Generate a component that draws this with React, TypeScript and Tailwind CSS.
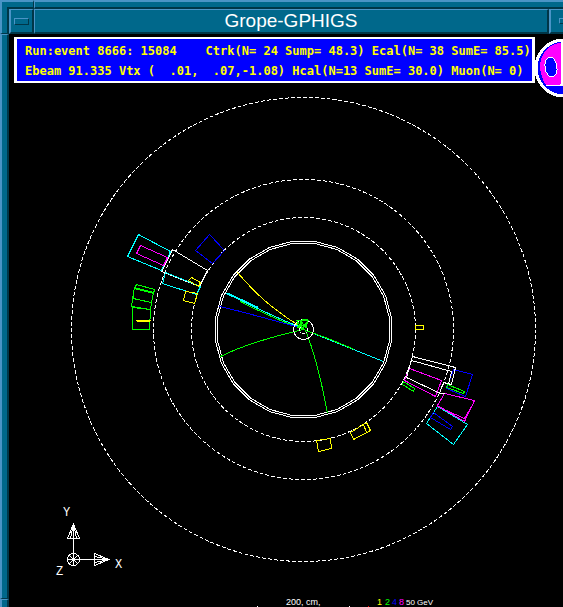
import type { ReactNode } from 'react';

// Types
interface ShapeProps {
  points: string;
  color: string;
}

// Detector geometry
const CENTER = { x: 303.5, y: 329.5 };
const WHITE = '#ffffff';
const YELLOW = '#ffff00';
const GREEN = '#00ff00';
const CYAN = '#00ffff';
const BLUE = '#0000ff';
const MAGENTA = '#ff00ff';

const DASHED_RADII = [232, 150, 112];

const towers: ShapeProps[] = [
  // upper left
  { color: WHITE, points: '172,249 207,270 199,286 161,271' },
  { color: CYAN, points: '138,234 170,251 161,270 127,256' },
  { color: MAGENTA, points: '140,245 167,257 163,265 136,253' },
  { color: CYAN, points: '165,272 200,286 196,294 162,283' },
  { color: YELLOW, points: '191,277 200,282 198,286 188,280' },
  { color: YELLOW, points: '185,291 197,293 194,303 183,300' },
  { color: BLUE, points: '209,234 224,250 212,263 195,250' },
  { color: GREEN, points: '136,284 154,289 153,293 134,288' },
  { color: GREEN, points: '134,287 153,292 151,302 132,298' },
  { color: GREEN, points: '133,293 131,306 150,309 151,302 133,298' },
  { color: GREEN, points: '132,307 150,309 149,329 132,329' },
  // right
  { color: YELLOW, points: '415,325 423,325 423,329 415,329' },
  { color: BLUE, points: '453,369 472,374 465,396 446,388' },
  { color: GREEN, points: '447,384 464,391 463,393 446,387' },
  { color: GREEN, points: '403,381 414,388 413,391 402,384' },
  { color: MAGENTA, points: '409,368 441,380 435,396 404,380' },
  { color: MAGENTA, points: '444,393 474,400 464,421 437,405' },
  { color: CYAN, points: '437,406 467,424 453,444 426,423' },
  { color: BLUE, points: '433,412 452,426 450,429 430,417' },
  // bottom
  { color: YELLOW, points: '316,440 330,438 331,448 318,451' },
  { color: YELLOW, points: '350,432 366,422 370,430 353,439' },
];

const strokes: ShapeProps[] = [
  { color: WHITE, points: '406,377 412,356 455,367 451,384 443,382 439,393 444,393' },
  { color: WHITE, points: '411,360 451,371 448,384' },
  { color: WHITE, points: '406,377 440,393' },
  { color: MAGENTA, points: '437,406 464,418 471,406' },
  { color: YELLOW, points: '363,424 366,432' },
];

const tracks = [
  { color: YELLOW, d: 'M237 272 Q254 292 270 305 T303 328' },
  { color: GREEN, d: 'M240 301 Q270 317 303 329' },
  { color: CYAN, d: 'M226 293 Q256 308 286 321 L303 328' },
  { color: CYAN, d: 'M228 293 L258 307' },
  { color: BLUE, d: 'M219 306 L240 311 L303 328' },
  { color: GREEN, d: 'M220 356 Q250 341 303 329' },
  { color: CYAN, d: 'M303 329 L338 343 L383 361' },
  { color: GREEN, d: 'M303 329 L330 339 L354 349' },
  { color: GREEN, d: 'M305 330 Q317 359 327 413' },
];

const scaleDigits = [
  { value: '1', x: 377, color: YELLOW },
  { value: '2', x: 385, color: GREEN },
  { value: '4', x: 392, color: BLUE },
  { value: '8', x: 399, color: MAGENTA },
];

const ringPoints = (apothem: number) => {
  const radius = apothem / Math.cos(Math.PI / 24);
  return Array.from({ length: 24 }, (_, i) => {
    const angle = ((i + 0.5) * Math.PI) / 12;
    return `${(CENTER.x + radius * Math.cos(angle)).toFixed(1)},${(CENTER.y + radius * Math.sin(angle)).toFixed(1)}`;
  }).join(' ');
};

// Components
const WindowFrame = ({ title, children }: { title: string; children: ReactNode }) => (
  <div className="flex min-h-screen w-full overflow-hidden bg-black">
    <div className="flex w-[9px] shrink-0 flex-col bg-[#00688b]">
      <div className="h-[7px] border-l-2 border-t-2 border-[#4a94c6]" />
      <div className="h-[27px] border-b border-l-2 border-r-2 border-b-[#003648] border-l-[#4a94c6] border-r-[#003648]" />
      <div className="flex-1 border-l-2 border-r-2 border-t border-l-[#4a94c6] border-r-[#003648] border-t-[#4a94c6]" />
      <div className="h-[9px] border-l-2 border-t border-l-[#4a94c6] border-t-[#003648]">
        <div className="h-full border-r-2 border-t border-r-[#003648] border-t-[#4a94c6]" />
      </div>
    </div>

    <div className="flex min-w-0 flex-1 flex-col">
      <div className="flex h-[9px] bg-[#00688b]">
        <div className="w-[25px] border-b-2 border-r border-t-2 border-b-[#003648] border-r-[#003648] border-t-[#4a94c6]" />
        <div className="flex-1 border-b-2 border-l border-t-2 border-b-[#003648] border-l-[#4a94c6] border-t-[#4a94c6]" />
      </div>
      <header className="flex h-[25px] bg-[#00688b]">
        <button
          type="button"
          aria-label="Window menu"
          className="flex w-[25px] items-center justify-center border-b-2 border-l-2 border-r-2 border-t border-b-[#003648] border-l-[#4a94c6] border-r-[#003648] border-t-[#4a94c6]"
        >
          <span className="h-[7px] w-[15px] border border-b-[#003648] border-l-[#4a94c6] border-r-[#003648] border-t-[#4a94c6]" />
        </button>
        <h1 className="flex flex-1 items-center justify-center border-b-2 border-l border-r-2 border-t border-b-[#003648] border-l-[#4a94c6] border-r-[#003648] border-t-[#4a94c6] pb-px font-['Liberation_Sans',sans-serif] text-[19px] leading-5 text-white">
          {title}
        </h1>
        <button
          type="button"
          aria-label="Minimize"
          className="flex w-[14px] items-center justify-end border-b-2 border-l-2 border-t border-b-[#003648] border-l-[#4a94c6] border-t-[#4a94c6]"
        >
          <span className="h-[6px] w-1 border-b border-l border-t border-b-[#003648] border-l-[#4a94c6] border-t-[#4a94c6]" />
        </button>
      </header>
      {children}
    </div>
  </div>
);

const EventSummary = () => (
  <div className="min-w-0 flex-1 border-2 border-x-[3px] border-white bg-[#0000ff] px-2 pt-0.5 font-['DejaVu_Sans_Mono',monospace] text-[12px] font-bold leading-5 text-[#ffff00]">
    <p className="whitespace-pre">Run:event 8666: 15084    Ctrk(N= 24 Sump= 48.3) Ecal(N= 38 SumE= 85.5)</p>
    <p className="whitespace-pre">Ebeam 91.335 Vtx (  .01,  .07,-1.08) Hcal(N=13 SumE= 30.0) Muon(N= 0)</p>
  </div>
);

const Logo = () => (
  <svg viewBox="535 37 28 61" className="h-[61px] w-7 shrink-0" shapeRendering="crispEdges">
    <circle cx="564" cy="68" r="28" fill={BLUE} stroke={WHITE} strokeWidth="3" />
    <path d="M562 43 Q552 43 546 50 Q540 57 540 68 Q541 78 546 85 L562 85 Z" fill={MAGENTA} />
    <path d="M546 85.5 H560 L562 83" fill="none" stroke={WHITE} />
    <ellipse cx="551" cy="67" rx="6" ry="10" fill={BLUE} stroke={WHITE} transform="rotate(-8 551 67)" />
    <path d="M562 42 V86" stroke={WHITE} strokeWidth="2" />
  </svg>
);

const AxisMarker = () => (
  <g fill="none" stroke={WHITE}>
    <circle cx="73.5" cy="559.5" r="6" />
    <path d="M73.5 566 V523 M67 559.5 H109 M69.5 555.5 L77.5 563.5 M77.5 555.5 L69.5 563.5" />
    <path d="M73.5 524 L67.5 538.5 H79.5 Z M73.5 524 L70.5 538 M73.5 524 L76.5 538" />
    <path d="M109 559.5 L94.5 553.5 V565.5 Z M109 559.5 L95 556.5 M109 559.5 L95 562.5" />
    <g fill={WHITE} stroke="none" className="font-['Liberation_Sans_Narrow','Liberation_Mono',monospace] text-[12px]">
      <text x="63" y="516">Y</text>
      <text x="115" y="568">X</text>
      <text x="56" y="575">Z</text>
    </g>
  </g>
);

const ScaleLabels = () => (
  <g className="font-['Liberation_Sans_Narrow','Liberation_Sans',sans-serif]">
    <text x="286" y="605" fill={WHITE} className="text-[9px]">200, cm,</text>
    {scaleDigits.map(({ value, x, color }) => (
      <text key={value} x={x} y="605" fill={color} className="text-[9px]">{value}</text>
    ))}
    <text x="406" y="605" fill={WHITE} className="text-[8px]">50 GeV</text>
    <rect x="257" y="606" width="1" height="1" fill={WHITE} />
    <rect x="349" y="606" width="1" height="1" fill={WHITE} />
    <rect x="368" y="606" width="1" height="1" fill="#ff0000" />
  </g>
);

const EventDisplay = () => (
  <svg viewBox="9 82 554 525" className="block w-full" shapeRendering="crispEdges" fill="none">
    {DASHED_RADII.map((r) => (
      <circle key={r} cx={CENTER.x} cy={CENTER.y} r={r} stroke={WHITE} strokeDasharray="4 2" />
    ))}
    <polygon points={ringPoints(88)} stroke={WHITE} />
    <polygon points={ringPoints(86)} stroke={WHITE} />

    <g transform="translate(0.5 0.5)">
      {towers.map(({ points, color }) => (
        <polygon key={points} points={points} stroke={color} />
      ))}
      {strokes.map(({ points, color }) => (
        <polyline key={points} points={points} stroke={color} />
      ))}
      <path d="M136 320 L150 321" stroke={YELLOW} strokeWidth="2" />
      {tracks.map(({ d, color }) => (
        <path key={d} d={d} stroke={color} />
      ))}
      <path d="M228 294 L258 308" stroke={CYAN} />
    </g>

    {/* interaction vertex */}
    <circle cx={CENTER.x} cy={CENTER.y} r="10" stroke={WHITE} />
    <circle cx="303.5" cy="329.5" r="4" stroke={WHITE} />
    <path
      d="M296 320.5 H308 L306 328 L301 321 L299 328 L297 321 M296 320 L303 329 L308 320 M301 322 V330 L306 323 M297 327 L306 325"
      stroke={GREEN}
    />
    <path d="M302 319.5 H308" stroke={GREEN} strokeWidth="2" />

    <AxisMarker />
    <ScaleLabels />
  </svg>
);

// Main component
export default function App() {
  return (
    <WindowFrame title="Grope-GPHIGS">
      <main className="flex-1 bg-black">
        <div className="flex h-12 items-start pl-[5px] pt-[3px]">
          <EventSummary />
          <Logo />
        </div>
        <EventDisplay />
      </main>
    </WindowFrame>
  );
}
